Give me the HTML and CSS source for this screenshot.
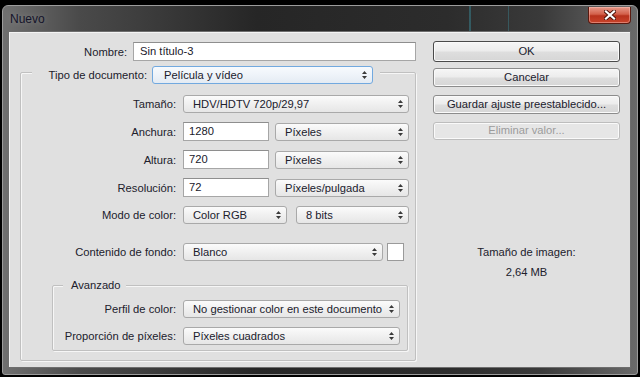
FILE: index.html
```html
<!DOCTYPE html>
<html>
<head>
    <meta http-equiv="Content-Type" content="text/html; charset=utf-8" />
    <title>Nuevo</title>
    <link rel="stylesheet" href="styles.css">
</head>
<body>
<div class="window">
  <div class="titlebar">
    <span class="title">Nuevo</span>
    <div class="close-button">
      <svg width="12" height="10" viewBox="0 0 12 10">
        <path d="M2 1.5L10 8.5M10 1.5L2 8.5" stroke="#4a1208" stroke-width="4" stroke-linecap="square"/>
        <path d="M2 1.5L10 8.5M10 1.5L2 8.5" stroke="#fff" stroke-width="2.2" stroke-linecap="square"/>
      </svg>
    </div>
  </div>

  <div class="client">
    <div class="main-col">
      <div class="name-row">
        <span class="lbl name-lbl">Nombre:</span>
        <div class="field name-field">Sin título-3</div>
      </div>

      <div class="group">
        <div class="group-head">
          <span class="lbl head-lbl">Tipo de documento:</span>
          <div class="select focused head-select">Película y vídeo<svg class="arrows" width="5" height="8" viewBox="0 0 5 8"><path d="M2.5 0L5 3H0zM0 5h5L2.5 8z"/></svg></div>
        </div>

        <div class="form-row first">
          <span class="lbl">Tamaño:</span>
          <div class="select wide">HDV/HDTV 720p/29,97<svg class="arrows" width="5" height="8" viewBox="0 0 5 8"><path d="M2.5 0L5 3H0zM0 5h5L2.5 8z"/></svg></div>
        </div>
        <div class="form-row">
          <span class="lbl">Anchura:</span>
          <div class="field num">1280</div>
          <div class="select unit">Píxeles<svg class="arrows" width="5" height="8" viewBox="0 0 5 8"><path d="M2.5 0L5 3H0zM0 5h5L2.5 8z"/></svg></div>
        </div>
        <div class="form-row">
          <span class="lbl">Altura:</span>
          <div class="field num">720</div>
          <div class="select unit">Píxeles<svg class="arrows" width="5" height="8" viewBox="0 0 5 8"><path d="M2.5 0L5 3H0zM0 5h5L2.5 8z"/></svg></div>
        </div>
        <div class="form-row">
          <span class="lbl">Resolución:</span>
          <div class="field num">72</div>
          <div class="select unit">Píxeles/pulgada<svg class="arrows" width="5" height="8" viewBox="0 0 5 8"><path d="M2.5 0L5 3H0zM0 5h5L2.5 8z"/></svg></div>
        </div>
        <div class="form-row">
          <span class="lbl">Modo de color:</span>
          <div class="select mode">Color RGB<svg class="arrows" width="5" height="8" viewBox="0 0 5 8"><path d="M2.5 0L5 3H0zM0 5h5L2.5 8z"/></svg></div>
          <div class="select bits">8 bits<svg class="arrows" width="5" height="8" viewBox="0 0 5 8"><path d="M2.5 0L5 3H0zM0 5h5L2.5 8z"/></svg></div>
        </div>
        <div class="form-row background-row">
          <span class="lbl">Contenido de fondo:</span>
          <div class="select bg">Blanco<svg class="arrows" width="5" height="8" viewBox="0 0 5 8"><path d="M2.5 0L5 3H0zM0 5h5L2.5 8z"/></svg></div>
          <div class="swatch"></div>
        </div>

        <div class="group advanced">
          <div class="group-head adv-head">Avanzado</div>
          <div class="form-row adv-first">
            <span class="lbl adv-lbl">Perfil de color:</span>
            <div class="select adv">No gestionar color en este documento<svg class="arrows" width="5" height="8" viewBox="0 0 5 8"><path d="M2.5 0L5 3H0zM0 5h5L2.5 8z"/></svg></div>
          </div>
          <div class="form-row">
            <span class="lbl adv-lbl">Proporción de píxeles:</span>
            <div class="select adv">Píxeles cuadrados<svg class="arrows" width="5" height="8" viewBox="0 0 5 8"><path d="M2.5 0L5 3H0zM0 5h5L2.5 8z"/></svg></div>
          </div>
        </div>
      </div>
    </div>

    <div class="side-col">
      <div class="btn default">OK</div>
      <div class="btn">Cancelar</div>
      <div class="btn">Guardar ajuste preestablecido...</div>
      <div class="btn disabled">Eliminar valor...</div>
      <div class="size-info">
        <div>Tamaño de imagen:</div>
        <div class="size-value">2,64 MB</div>
      </div>
    </div>
  </div>
</div>
</body>
</html>
```

FILE: styles.css
```css
body {
    margin: 0;
    background-color: #000;
    font-family: "Liberation Sans", Arial, sans-serif;
    font-size: 11.2px;
    color: #20202c;
}

.window {
    margin: 5px 2px 2px 2px;
    height: 370px;
    box-sizing: border-box;
    border: 1px solid #9c9c9c;
    border-radius: 6px 6px 3px 3px;
    background: linear-gradient(to right, #707070, #4a4a4a 12%, #262626 40%, #2c2c2c 70%, #3a3a3a 85%, #6a6a6a);
    display: flex;
    flex-direction: column;
    padding: 0 6px 6px 5px;
}

.titlebar {
    height: 25px;
    display: flex;
    align-items: flex-start;
    background:
        linear-gradient(to right, transparent 461px, rgba(60, 170, 190, 0.35) 461px, rgba(60, 170, 190, 0.35) 463px, transparent 463px,
                        transparent 500px, rgba(60, 170, 190, 0.3) 500px, rgba(60, 170, 190, 0.3) 501px, transparent 501px);
}

.title {
    margin: 6px 0 0 2px;
    font-size: 12px;
    color: #14142a;
    text-shadow: 0 0 6px rgba(255, 255, 255, 0.25);
}

.close-button {
    margin: 1px 0 0 auto;
    width: 43px;
    height: 17px;
    box-sizing: border-box;
    border: 1px solid #5a1a10;
    border-top: none;
    border-radius: 0 0 4px 4px;
    background: linear-gradient(#e79a8a, #d3604a 45%, #b8321c 55%, #c9442b);
    box-shadow: inset 0 0 0 1px rgba(255, 200, 190, 0.45);
    display: flex;
    justify-content: center;
    align-items: center;
}

.client {
    flex: 1;
    background-color: #e0e0e0;
    border: 1px solid #6e6e6e;
    box-shadow: inset 1px 1px 0 #f4f4f4;
    display: flex;
    padding: 9px 10px 0 11px;
}

.main-col {
    width: 396px;
    display: flex;
    flex-direction: column;
}

.lbl {
    flex: none;
    text-align: right;
    white-space: nowrap;
}

.name-row {
    display: flex;
    align-items: center;
    gap: 6px;
    margin-top: 1px;
}

.name-lbl {
    width: 107px;
}

.field {
    box-sizing: border-box;
    height: 19px;
    line-height: 17px;
    background-color: #fff;
    border: 1px solid #a6a6a6;
    border-top-color: #8e8e8e;
    padding: 0 5px;
    white-space: nowrap;
}

.name-field {
    width: 283px;
    padding-left: 6px;
}

.group {
    margin-top: 11px;
    border: 1px solid #c0c0c0;
    border-radius: 2px;
    box-shadow: inset 1px 1px 0 #f6f6f6, 1px 1px 0 #f6f6f6;
    display: flex;
    flex-direction: column;
    padding-bottom: 9px;
}

.group-head {
    align-self: flex-start;
    display: flex;
    align-items: center;
    margin: -7px 0 0 11px;
    padding: 0 7px 0 14px;
    background-color: #e0e0e0;
}

.head-lbl {
    width: 101px;
    margin-right: 5px;
}

.select {
    box-sizing: border-box;
    height: 18px;
    border: 1px solid #a9a9a9;
    border-radius: 3px;
    background: linear-gradient(#fbfbfb, #f0f0f0 50%, #e6e6e6);
    display: flex;
    align-items: center;
    justify-content: space-between;
    padding: 0 5px 0 9px;
    white-space: nowrap;
}

.select.focused {
    border-color: #72a9df;
    background: linear-gradient(#f7fafd, #eef3f9 50%, #e4ebf3);
}

.arrows {
    flex: none;
    fill: #3a3a3a;
}

.head-select {
    width: 221px;
    padding-left: 11px;
}

.form-row {
    display: flex;
    align-items: center;
    gap: 7px;
    margin-top: 9px;
}

.form-row .lbl {
    width: 155px;
}

.form-row.first {
    margin-top: 11px;
}

.wide {
    width: 226px;
}

.num {
    width: 86px;
}

.unit {
    width: 134px;
    margin-left: -1px;
}

.mode {
    width: 104px;
}

.bits {
    width: 113px;
    margin-left: 2px;
}

.background-row {
    margin-top: 19px;
    gap: 0;
}

.background-row .lbl {
    margin-right: 7px;
}

.bg {
    width: 200px;
}

.swatch {
    width: 15px;
    height: 16px;
    margin-left: 4px;
    background-color: #fff;
    border: 1px solid #9a9a9a;
}

.group.advanced {
    margin: 24px 7px 0 31px;
    padding-bottom: 5px;
}

.adv-head {
    margin: -8px 0 0 10px;
    padding: 0 5px 0 8px;
    line-height: 14px;
}

.form-row.adv-first {
    margin-top: 8px;
}

.form-row .adv-lbl {
    width: 123px;
}

.adv {
    width: 217px;
}

.side-col {
    width: 187px;
    margin-left: 17px;
    display: flex;
    flex-direction: column;
}

.btn {
    box-sizing: border-box;
    height: 19px;
    margin-top: 8px;
    border: 1px solid #8c8c8c;
    border-radius: 3px;
    background: linear-gradient(#f6f6f6, #ececec 48%, #dedede 52%, #d6d6d6);
    box-shadow: inset 0 0 0 1px #fafafa;
    text-align: center;
    line-height: 16px;
    white-space: nowrap;
}

.btn.default {
    height: 21px;
    margin-top: 0;
    border-color: #4a4a4a;
    line-height: 18px;
}

.btn.default + .btn {
    margin-top: 6px;
}

.btn.disabled {
    height: 18px;
    color: #9c9c9c;
    border-color: #bdbdbd;
    background: #e6e6e6;
    line-height: 15px;
}

.size-info {
    margin-top: 105px;
    text-align: center;
    line-height: 14px;
}

.size-value {
    margin-top: 6px;
}
```
